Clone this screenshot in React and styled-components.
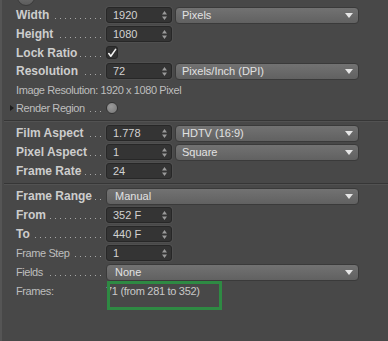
import styled, { createGlobalStyle } from "styled-components";

const GlobalStyle = createGlobalStyle`
  html, body {
    margin: 0;
    padding: 0;
    background: #484848;
  }
  body {
    width: 388px;
    height: 341px;
    overflow: hidden;
    font-family: "Liberation Sans", Arial, sans-serif;
  }
`;

const Panel = styled.div`
  position: relative;
  width: 388px;
  height: 341px;
  box-sizing: border-box;
  background: #484848;
  border-left: 2px solid #555555;
  overflow: hidden;
`;

const TopKnob = styled.div`
  position: absolute;
  left: 15px;
  top: -12px;
  width: 16px;
  height: 16px;
  border-radius: 50%;
  background: linear-gradient(#7a7a7a, #5c5c5c);
  border: 1px solid #3a3a3a;
`;

const Section = styled.div`
  display: flex;
  flex-direction: column;
  gap: 3px;
  padding: ${(p) => p.$pad};
`;

const Separator = styled.div`
  margin-left: 2px;
  height: 0;
  border-top: 1px solid #363636;
  border-bottom: 1px solid #525252;
`;

const Row = styled.div`
  position: relative;
  display: flex;
  align-items: center;
  gap: 3px;
  height: ${(p) => p.$h || 16}px;
  padding-left: 14px;
`;

const Label = styled.div`
  display: flex;
  align-items: baseline;
  width: 87px;
  flex-shrink: 0;
  white-space: nowrap;
  font-size: ${(p) => (p.$bold ? "12px" : "11px")};
  font-weight: ${(p) => (p.$bold ? 700 : 400)};
  letter-spacing: ${(p) => (p.$bold ? "0" : "-0.4px")};
  color: ${(p) => (p.$bold ? "#cdcdcd" : "#bebebe")};
`;

const Leader = styled.span`
  flex: 1;
  height: 1px;
  margin-left: 3px;
  background-image: repeating-linear-gradient(
    to left,
    transparent 0 2px,
    #a6a6a6 2px 3px,
    transparent 3px 5px
  );
`;

const Plain = styled.div`
  font-size: 11px;
  letter-spacing: -0.4px;
  color: #bebebe;
  white-space: nowrap;
`;

const Value = styled.div`
  font-size: 11px;
  letter-spacing: -0.3px;
  color: #c8c8c8;
  white-space: nowrap;
`;

const Expander = styled.span`
  position: absolute;
  left: 8px;
  top: 50%;
  margin-top: -3px;
  width: 0;
  height: 0;
  border-top: 3px solid transparent;
  border-bottom: 3px solid transparent;
  border-left: 4px solid #1c1c1c;
`;

const NumField = styled.div`
  display: flex;
  align-items: center;
  justify-content: space-between;
  box-sizing: border-box;
  width: 66px;
  height: 16px;
  padding: 0 4px 0 6px;
  background: #343434;
  border: 1px solid #272727;
  border-radius: 3px;
  box-shadow: 0 0 0 1px #4f4f4f;
  font-size: 11px;
  color: #d2d2d2;
`;

const Select = styled.div`
  display: flex;
  align-items: center;
  justify-content: space-between;
  box-sizing: border-box;
  width: ${(p) => p.$w}px;
  height: 17px;
  padding: 0 5px 0 ${(p) => p.$pl || 6}px;
  background: linear-gradient(#727272, #616161);
  border: 1px solid #3a3a3a;
  border-radius: 4px;
  font-size: 11px;
  color: #e2e2e2;
`;

const CheckBox = styled.div`
  display: flex;
  align-items: center;
  justify-content: center;
  box-sizing: border-box;
  width: 12px;
  height: 13px;
  background: #303030;
  border: 1px solid #262626;
  border-radius: 3px;
`;

const Toggle = styled.div`
  box-sizing: border-box;
  width: 12px;
  height: 12px;
  border-radius: 50%;
  background: radial-gradient(circle at 40% 35%, #9a9a9a, #767676);
  border: 1px solid #333333;
`;

const Highlight = styled.div`
  position: absolute;
  left: 105px;
  top: 281px;
  width: 115px;
  height: 29px;
  box-sizing: border-box;
  border: 3px solid #2e8a43;
`;

const Spinner = () => (
  <svg width="5" height="9" viewBox="0 0 5 9">
    <path d="M2.5 0 L5 3.5 L0 3.5 Z" fill="#9a9a9a" />
    <path d="M0 5.5 L5 5.5 L2.5 9 Z" fill="#9a9a9a" />
  </svg>
);

const Arrow = () => (
  <svg width="8" height="5" viewBox="0 0 8 5">
    <path d="M0 0 L8 0 L4 5 Z" fill="#e6e6e6" />
  </svg>
);

const Check = () => (
  <svg width="10" height="10" viewBox="0 0 10 10">
    <path
      d="M1.8 5.6 L3.8 8.2 L8.6 1.4"
      fill="none"
      stroke="#f2f2f2"
      strokeWidth="1.6"
      strokeLinecap="round"
      strokeLinejoin="round"
    />
  </svg>
);

const Field = ({ children }) => (
  <NumField>
    <span>{children}</span>
    <Spinner />
  </NumField>
);

const Dropdown = ({ w, pl, children }) => (
  <Select $w={w} $pl={pl}>
    <span>{children}</span>
    <Arrow />
  </Select>
);

const Name = ({ bold, dots = true, children }) => (
  <Label $bold={bold}>
    {children}
    {dots && <Leader />}
  </Label>
);

const App = () => {
  return (
    <Panel>
      <GlobalStyle />
      <TopKnob />
      <Section $pad="7px 0 6px 0">
        <Row>
          <Name bold>Width</Name>
          <Field>1920</Field>
          <Dropdown w={184}>Pixels</Dropdown>
        </Row>
        <Row>
          <Name bold>Height</Name>
          <Field>1080</Field>
        </Row>
        <Row $h={15}>
          <Name bold>Lock Ratio</Name>
          <CheckBox>
            <Check />
          </CheckBox>
        </Row>
        <Row>
          <Name bold>Resolution</Name>
          <Field>72</Field>
          <Dropdown w={184}>Pixels/Inch (DPI)</Dropdown>
        </Row>
        <Row>
          <Plain>Image Resolution: 1920 x 1080 Pixel</Plain>
        </Row>
        <Row $h={13}>
          <Expander />
          <Name>Render Region</Name>
          <Toggle />
        </Row>
      </Section>
      <Separator />
      <Section $pad="3px 0 4px 0">
        <Row>
          <Name bold>Film Aspect</Name>
          <Field>1.778</Field>
          <Dropdown w={184}>HDTV (16:9)</Dropdown>
        </Row>
        <Row>
          <Name bold>Pixel Aspect</Name>
          <Field>1</Field>
          <Dropdown w={184}>Square</Dropdown>
        </Row>
        <Row>
          <Name bold>Frame Rate</Name>
          <Field>24</Field>
        </Row>
      </Section>
      <Separator />
      <Section $pad="3px 0 0 0">
        <Row>
          <Name bold>Frame Range</Name>
          <Dropdown w={253} pl={8}>
            Manual
          </Dropdown>
        </Row>
        <Row>
          <Name bold>From</Name>
          <Field>352 F</Field>
        </Row>
        <Row>
          <Name bold>To</Name>
          <Field>440 F</Field>
        </Row>
        <Row>
          <Name>Frame Step</Name>
          <Field>1</Field>
        </Row>
        <Row>
          <Name>Fields</Name>
          <Dropdown w={253} pl={8}>
            None
          </Dropdown>
        </Row>
        <Row>
          <Name dots={false}>Frames:</Name>
          <Value>71 (from 281 to 352)</Value>
        </Row>
      </Section>
      <Highlight />
    </Panel>
  );
};

export default App;
